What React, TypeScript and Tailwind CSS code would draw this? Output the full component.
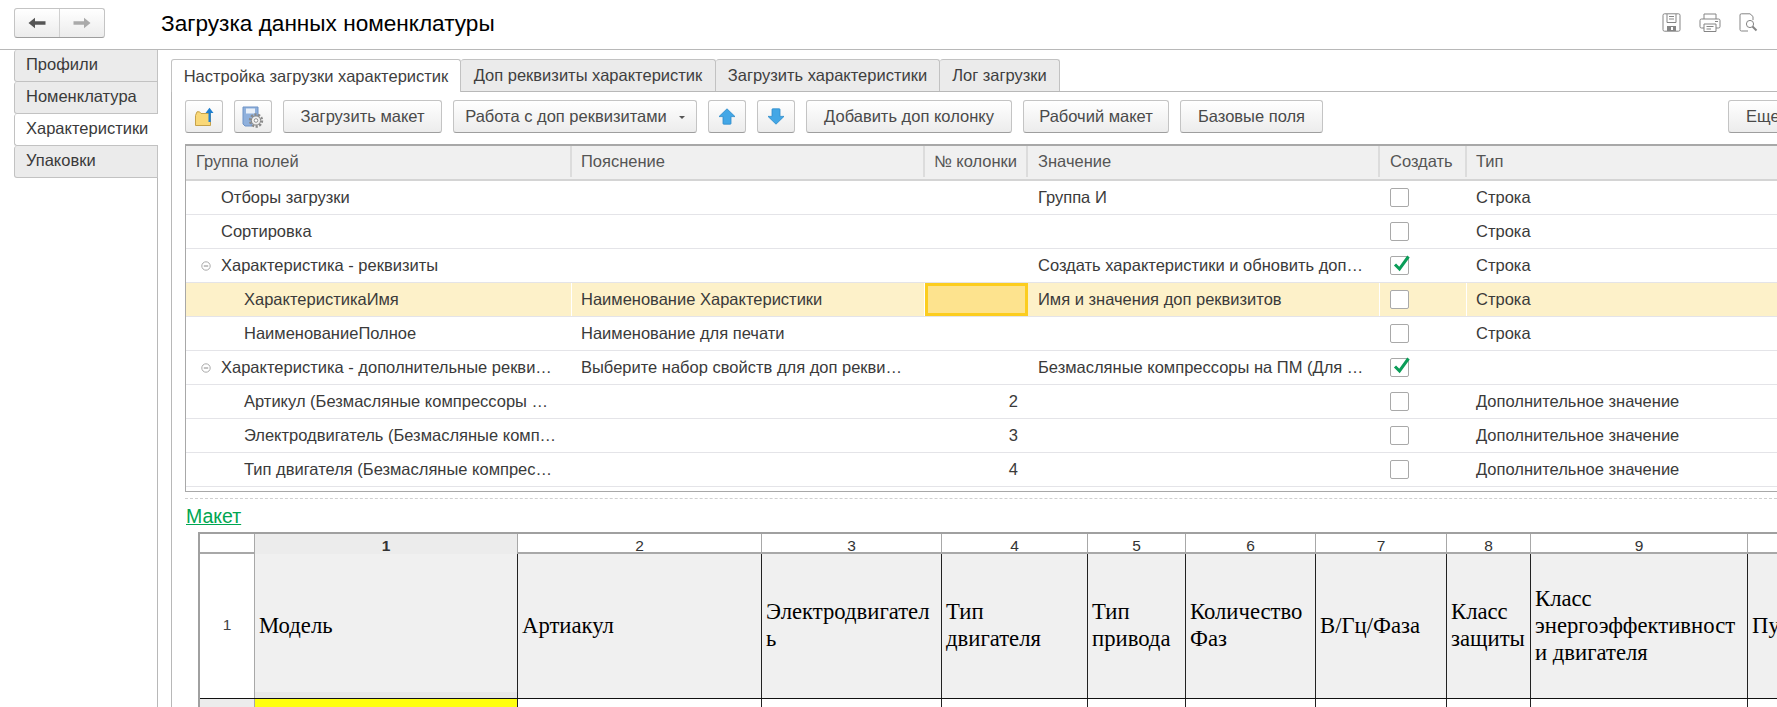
const sideTabs = [
  { name: "Профили" },
  { name: "Номенклатура" },
  { name: "Характеристики", active: true },
  { name: "Упаковки" },
];

const pageTabs = [
  { name: "Настройка загрузки характеристик", width: "w-[290px]", active: true },
  { name: "Доп реквизиты характеристик", width: "w-[255px]" },
  { name: "Загрузить характеристики", width: "w-[224px]" },
  { name: "Лог загрузки", width: "w-[120px]" },
];

const columns = "grid grid-cols-[386px_353px_103px_352px_87px_1fr]";

type Row = {
  name: string;
  level: 0 | 1;
  tree?: boolean;
  note?: string;
  col?: string;
  value?: string;
  checked?: boolean;
  type?: string;
  current?: boolean;
};

const rows: Row[] = [
  { name: "Отборы загрузки", level: 0, value: "Группа И", type: "Строка" },
  { name: "Сортировка", level: 0, type: "Строка" },
  {
    name: "Характеристика - реквизиты",
    level: 0,
    tree: true,
    value: "Создать характеристики и обновить доп…",
    checked: true,
    type: "Строка",
  },
  {
    name: "ХарактеристикаИмя",
    level: 1,
    note: "Наименование Характеристики",
    value: "Имя и значения доп реквизитов",
    type: "Строка",
    current: true,
  },
  { name: "НаименованиеПолное", level: 1, note: "Наименование для печати", type: "Строка" },
  {
    name: "Характеристика - дополнительные рекви…",
    level: 0,
    tree: true,
    note: "Выберите набор свойств для доп рекви…",
    value: "Безмасляные компрессоры на ПМ (Для …",
    checked: true,
  },
  { name: "Артикул (Безмасляные компрессоры …", level: 1, col: "2", type: "Дополнительное значение" },
  { name: "Электродвигатель (Безмасляные комп…", level: 1, col: "3", type: "Дополнительное значение" },
  { name: "Тип двигателя (Безмасляные компрес…", level: 1, col: "4", type: "Дополнительное значение" },
];

const sheetColumns =
  "grid grid-cols-[55px_263px_244px_180px_146px_98px_130px_131px_84px_217px_60px]";

const sheetHead = ["Модель", "Артиакул", "Электродвигател\nь", "Тип\nдвигателя", "Тип\nпривода", "Количество\nФаз", "В/Гц/Фаза", "Класс\nзащиты", "Класс\nэнергоэффективност\nи двигателя", "Пу"];

function ToolButton({ width, children }: { width: string; children: React.ReactNode }) {
  return (
    <button
      className={`${width} h-[33px] shrink-0 flex items-center justify-center rounded-[3px] border border-[#c4c4c4] border-b-[#9e9e9e] bg-gradient-to-b from-white to-[#ececec] text-[16.5px] text-[#4a4a4a] whitespace-nowrap`}
    >
      {children}
    </button>
  );
}

function FolderIcon() {
  return (
    <svg width="20" height="20" viewBox="0 0 20 20">
      <path d="M1.5 8.5 L1.5 18.5 L16.5 18.5 L16.5 6.5 L7 6.5 L5.5 4.8 L3 4.8 Z" fill="#f9d878" stroke="#c6a24a" />
      <path d="M14.5 15 L14.5 6 L11.5 6 L15.5 0.8 L19.5 6 L16.8 6 L16.8 15 Z" fill="#1f7fd0" />
    </svg>
  );
}

function SettingsIcon() {
  return (
    <svg width="22" height="22" viewBox="0 0 22 22">
      <path d="M1 1 H16 V13 H10 V20 H3 L1 18 Z" fill="#8fb0dc" stroke="#6f93c6" />
      <rect x="4" y="2.5" width="9" height="5" fill="#e9f0f9" />
      <circle cx="14" cy="14.5" r="6" fill="none" stroke="#8a8a8a" strokeWidth="2.4" strokeDasharray="2.2 1.5" />
      <circle cx="14" cy="14.5" r="4.6" fill="#efefef" stroke="#858585" />
      <circle cx="14" cy="14.5" r="1.8" fill="#fff" stroke="#858585" strokeWidth="0.9" />
    </svg>
  );
}

function ArrowIcon({ down }: { down?: boolean }) {
  return (
    <svg width="18" height="17" viewBox="0 0 18 17" className={down ? "rotate-180" : ""}>
      <path d="M9 0.8 L17 8.6 L13 8.6 L13 15.5 Q13 16.2 12.3 16.2 L5.7 16.2 Q5 16.2 5 15.5 L5 8.6 L1 8.6 Z" fill="#43a7e6" stroke="#2d8cca" strokeWidth="0.8" />
    </svg>
  );
}

function TreeMinus() {
  return (
    <svg width="10" height="10" viewBox="0 0 10 10" className="absolute left-[15px] top-[12px]">
      <circle cx="5" cy="5" r="4.2" fill="none" stroke="#aaa" />
      <path d="M2.8 5 H7.2" stroke="#888" />
    </svg>
  );
}

function CheckCell({ checked }: { checked?: boolean }) {
  return (
    <div className="relative w-[19px] h-[19px] ml-[10px] rounded-[2px] border border-[#a9a9a9] bg-white">
      {checked && (
        <svg width="20" height="19" viewBox="0 0 20 19" className="absolute left-[1px] top-[-3px]">
          <path d="M3 10.5 L7.5 15 L16.5 2.5" fill="none" stroke="#0a9d58" strokeWidth="3" />
        </svg>
      )}
    </div>
  );
}

function TableRow({ row }: { row: Row }) {
  const sep = row.current ? "border-r border-white" : "";
  return (
    <div className={`${columns} h-[34px] border-b border-[#e4e4e8] text-[16.5px] text-[#3a3a3a] ${row.current ? "bg-[#fdf1c9]" : ""}`}>
      <div className={`relative flex items-center whitespace-nowrap overflow-hidden ${row.level === 1 ? "pl-[58px]" : "pl-[35px]"} ${sep}`}>
        {row.tree && <TreeMinus />}
        {row.name}
      </div>
      <div className={`flex items-center pl-[9px] whitespace-nowrap overflow-hidden ${sep}`}>{row.note}</div>
      {row.current ? (
        <div className="border-[3px] border-[#fccd1f] bg-[#fde38e]" />
      ) : (
        <div className="flex items-center justify-end pr-[10px]">{row.col}</div>
      )}
      <div className={`flex items-center pl-[10px] whitespace-nowrap overflow-hidden ${sep}`}>{row.value}</div>
      <div className={`flex items-center ${sep}`}>
        <CheckCell checked={row.checked} />
      </div>
      <div className="flex items-center pl-[9px] whitespace-nowrap">{row.type}</div>
    </div>
  );
}

export default function App() {
  return (
    <div className="w-[1777px] h-[707px] overflow-hidden bg-white font-['Liberation_Sans',Arial,sans-serif]">
      <header className="h-[49px] flex">
        <div className="ml-[14px] mt-[8px] w-[91px] h-[30px] flex rounded-[3px] border border-[#c4c4c4] border-b-[#9e9e9e] bg-gradient-to-b from-white to-[#ececec]">
          <div className="flex-1 flex items-center justify-center border-r border-[#d0d0d0]">
            <svg width="18" height="12" viewBox="0 0 18 12">
              <path d="M0.5 6 L7 0.8 L7 4.2 L17.5 4.2 L17.5 7.8 L7 7.8 L7 11.2 Z" fill="#555" />
            </svg>
          </div>
          <div className="flex-1 flex items-center justify-center">
            <svg width="18" height="12" viewBox="0 0 18 12">
              <path d="M17.5 6 L11 0.8 L11 4.2 L0.5 4.2 L0.5 7.8 L11 7.8 L11 11.2 Z" fill="#aaa" />
            </svg>
          </div>
        </div>
        <h1 className="ml-[56px] mt-[9px] h-[30px] leading-[30px] text-[22.6px] text-black">Загрузка данных номенклатуры</h1>
        <div className="ml-auto mr-[19px] mt-[13px] flex items-start gap-[18px] text-[#7a7a7a]">
          <svg width="19" height="19" viewBox="0 0 19 19" fill="none" stroke="#858585">
            <path d="M2.5 0.8 H16.5 Q18 0.8 18 2.3 V16.7 Q18 18.2 16.5 18.2 H2.5 Q1 18.2 1 16.7 V2.3 Q1 0.8 2.5 0.8 Z" />
            <path d="M5 1 V9.5 H14 V1 M7 3.5 H12 M7 6 H12" />
            <rect x="5" y="13" width="9" height="5" fill="#858585" stroke="none" />
            <rect x="9" y="14" width="2" height="3" fill="#fff" stroke="none" />
          </svg>
          <svg width="22" height="19" viewBox="0 0 22 19" fill="none" stroke="#858585">
            <path d="M5 6 V1 H17 V6" />
            <path d="M5 15 H2.5 Q1 15 1 13.5 V7.5 Q1 6 2.5 6 H19.5 Q21 6 21 7.5 V13.5 Q21 15 19.5 15 H17" />
            <path d="M5 11 H17 V18.5 H5 Z M7.5 13.5 H14.5 M7.5 16 H12 M16 8.5 H19" />
          </svg>
          <svg width="19" height="19" viewBox="0 0 19 19" fill="none" stroke="#858585">
            <path d="M9 18 H2.5 Q1 18 1 16.5 V2 Q1 0.8 2.5 0.8 H11 L14 3.5 V7" />
            <circle cx="11" cy="11" r="3.6" />
            <path d="M13.5 13.5 L17.5 17.5" strokeWidth="2" />
          </svg>
        </div>
      </header>

      <div className="h-[658px] flex border-t border-[#b8b8b8]">
        <aside className="w-[158px] shrink-0 pl-[14px] border-r border-[#b8b8b8]">
          {sideTabs.map((tab) => (
            <div
              key={tab.name}
              className={`h-[32px] -mr-px pl-[11px] pb-[2px] flex items-center rounded-l-[3px] border-l border-b border-[#c2c2c2] text-[16.5px] text-[#3a3a3a] ${tab.active ? "bg-white relative" : "bg-[#ebebeb] border-r"}`}
            >
              {tab.name}
            </div>
          ))}
        </aside>

        <main className="flex-1 min-w-0 pl-[13px] pt-[9px]">
          <div className="h-[32px] flex">
            {pageTabs.map((tab) => (
              <div
                key={tab.name}
                className={`${tab.width} h-[32px] flex items-center justify-center rounded-t-[3px] border-t border-r border-[#c2c2c2] text-[16.5px] text-[#3f3f3f] whitespace-nowrap ${tab.active ? "bg-white border-l relative z-10 h-[33px]" : "bg-[#ebebeb]"}`}
              >
                {tab.name}
              </div>
            ))}
          </div>

          <div className="h-[616px] border-t border-l border-[#b8b8b8] pl-[13px] pt-[8px]">
            <div className="flex gap-[11px]">
              <ToolButton width="w-[38px]">
                <FolderIcon />
              </ToolButton>
              <ToolButton width="w-[38px]">
                <SettingsIcon />
              </ToolButton>
              <ToolButton width="w-[159px]">Загрузить макет</ToolButton>
              <ToolButton width="w-[244px]">
                Работа с доп реквизитами
                <span className="ml-[12px] mt-[2px] border-x-[3px] border-t-[3px] border-x-transparent border-t-[#555]" />
              </ToolButton>
              <ToolButton width="w-[38px]">
                <ArrowIcon />
              </ToolButton>
              <ToolButton width="w-[38px]">
                <ArrowIcon down />
              </ToolButton>
              <ToolButton width="w-[206px]">Добавить доп колонку</ToolButton>
              <ToolButton width="w-[146px]">Рабочий макет</ToolButton>
              <ToolButton width="w-[143px]">Базовые поля</ToolButton>
              <div className="ml-[394px]">
                <ToolButton width="w-[70px] !justify-start pl-[17px]">Еще</ToolButton>
              </div>
            </div>

            <div className="mt-[11px] h-[348px] border border-t-2 border-[#a8a8a8] border-r-0">
              <div className={`${columns} h-[35px] pb-[2px] bg-[#f0f0f0] border-b-2 border-[#d4d4d4] text-[16.5px] text-[#555]`}>
                <div className="flex items-center pl-[10px] border-r-2 border-[#dcdcdc]">Группа полей</div>
                <div className="flex items-center pl-[9px] border-r-2 border-[#dcdcdc]">Пояснение</div>
                <div className="flex items-center pl-[9px] border-r-2 border-[#dcdcdc] whitespace-nowrap">№ колонки</div>
                <div className="flex items-center pl-[10px] border-r-2 border-[#dcdcdc]">Значение</div>
                <div className="flex items-center pl-[10px] border-r-2 border-[#dcdcdc]">Создать</div>
                <div className="flex items-center pl-[9px]">Тип</div>
              </div>
              {rows.map((row) => (
                <TableRow key={row.name} row={row} />
              ))}
            </div>

            <div className="mt-[6px] border-t border-dashed border-[#cfcfcf]" />
            <a className="block mt-[6px] ml-px w-fit h-[22px] leading-[22px] text-[19.5px] text-[#00a651] underline">Макет</a>

            <div className="mt-[5px] ml-[13px] border-t-[2px] border-l-[2px] border-[#a0a0a0]">
              <div className={`${sheetColumns} h-[20px] border-b-2 border-[#a8a8a8] text-[15.5px] text-[#333]`}>
                <div className="border-r border-[#a8a8a8]" />
                <div className="flex items-center justify-center bg-[#ececec] font-bold border-r border-[#a8a8a8]">1</div>
                {["2", "3", "4", "5", "6", "7", "8", "9", ""].map((n, i) => (
                  <div key={i} className="flex items-center justify-center border-r border-[#a8a8a8]">{n}</div>
                ))}
              </div>
              <div className={`${sheetColumns} h-[144px] font-['Liberation_Serif',serif] text-[22.7px] leading-[27px] text-black`}>
                <div className="pb-[3px] flex items-center justify-center border-r border-[#a8a8a8] font-['Liberation_Sans',sans-serif] text-[15.5px] text-[#444]">1</div>
                {sheetHead.map((text, i) => (
                  <div key={i} className="relative flex items-center pl-[4px] pb-[2px] bg-[#f0f0f0] border-r border-[#222] whitespace-pre overflow-visible">
                    {text}
                    {i === 0 && <div className="absolute bottom-0 left-0 -right-[6px] h-[6px] bg-black/[0.03]" />}
                  </div>
                ))}
              </div>
              <div className={`${sheetColumns} h-[20px] border-t border-[#111]`}>
                <div className="bg-[#ececec] border-r border-[#a8a8a8]" />
                <div className="bg-[#ffff0f] border-r border-[#222]" />
                {[2, 3, 4, 5, 6, 7, 8, 9, 10].map((n) => (
                  <div key={n} className="border-r border-[#222]" />
                ))}
              </div>
            </div>
          </div>
        </main>
      </div>
    </div>
  );
}
